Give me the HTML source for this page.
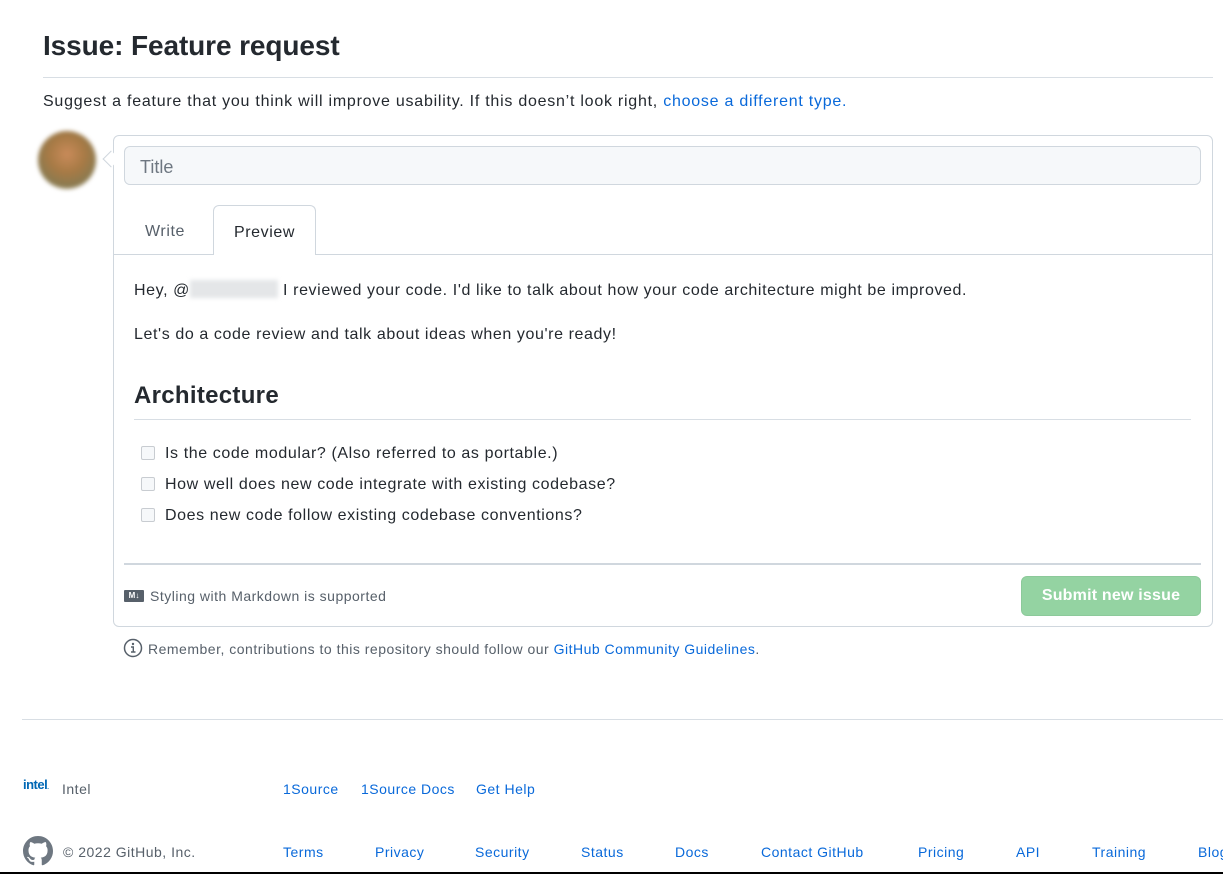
<!DOCTYPE html>
<html><head><meta charset="utf-8"><style>
*{box-sizing:border-box;margin:0;padding:0}
body{width:1223px;height:874px;overflow:hidden;background:#fff;font-family:"Liberation Sans","DejaVu Sans",sans-serif;color:#24292f;position:relative}
.a{position:absolute;white-space:nowrap}
a,.l{color:#0969da;text-decoration:none}
.t{letter-spacing:0.6px}
.s{letter-spacing:0.5px}
.cb{position:absolute;width:14px;height:14px;border:1px solid #c8ccd1;border-radius:2px;background:#f6f8fa}
</style></head><body>
<div class="a" style="left:43px;top:30px;font-size:28px;font-weight:600;letter-spacing:-0.1px">Issue: Feature request</div>
<div class="a" style="left:43px;top:77px;width:1170px;height:1px;background:#d8dee4"></div>
<div class="a" style="left:43px;top:93px;font-size:16px;letter-spacing:0.75px">Suggest a feature that you think will improve usability. If this doesn’t look right, <span class="l">choose a different type.</span></div>
<div class="a" style="left:38px;top:131px;width:58px;height:58px;border-radius:50%;background:radial-gradient(circle at 50% 40%,#c98b5a 0%,#a77a45 40%,#8a7a50 70%,#e8e0d0 100%);filter:blur(2px)"></div>
<div class="a" style="left:113px;top:135px;width:1100px;height:492px;border:1px solid #d0d7de;border-radius:6px"></div>
<div class="a" style="left:105px;top:153px;width:12px;height:12px;border-left:1px solid #d0d7de;border-bottom:1px solid #d0d7de;background:#fff;transform:rotate(45deg)"></div>
<div class="a" style="left:124px;top:146px;width:1077px;height:39px;border:1px solid #d0d7de;border-radius:6px;background:#f6f8fa;padding:10px 15px;font-size:18px;color:#6e7781" class="t">Title</div>
<div class="a" style="left:114px;top:254px;width:1098px;height:1px;background:#d0d7de"></div>
<div class="a t" style="left:145px;top:223px;font-size:16px;color:#57606a">Write</div>
<div class="a t" style="left:213px;top:205px;width:103px;height:50px;border:1px solid #d0d7de;border-bottom:none;border-radius:6px 6px 0 0;background:#fff;padding-top:18px;text-align:center;font-size:16px">Preview</div>
<div class="a t" style="left:134px;top:280px;font-size:16px">Hey, @<span style="display:inline-block;width:88px;height:18px;background:#e4e6e8;vertical-align:-3px;filter:blur(2px)"></span> I reviewed your code. I'd like to talk about how your code architecture might be improved.</div>
<div class="a t" style="left:134px;top:326px;font-size:16px">Let's do a code review and talk about ideas when you're ready!</div>
<div class="a" style="left:134px;top:382px;font-size:24px;font-weight:600;letter-spacing:0.3px">Architecture</div>
<div class="a" style="left:134px;top:419px;width:1057px;height:1px;background:#d8dee4"></div>
<div class="cb" style="left:141px;top:446px"></div>
<div class="a t" style="left:165px;top:445px;font-size:16px">Is the code modular? (Also referred to as portable.)</div>
<div class="cb" style="left:141px;top:477px"></div>
<div class="a t" style="left:165px;top:476px;font-size:16px">How well does new code integrate with existing codebase?</div>
<div class="cb" style="left:141px;top:508px"></div>
<div class="a t" style="left:165px;top:507px;font-size:16px">Does new code follow existing codebase conventions?</div>
<div class="a" style="left:124px;top:563px;width:1077px;height:2px;background:#d0d7de"></div>
<div class="a" style="left:124px;top:590px;width:20px;height:12px;background:#57606a;border-radius:1px;color:#fff;font-size:8px;font-weight:bold;line-height:12px;text-align:center">M↓</div>
<div class="a s" style="left:150px;top:588px;font-size:14px;color:#57606a">Styling with Markdown is supported</div>
<div class="a" style="left:1021px;top:576px;width:180px;height:40px;background:#94d3a2;border:1px solid #8cc99a;border-radius:6px;color:#fff;font-size:16px;font-weight:600;text-align:center;line-height:38px;letter-spacing:0.2px">Submit new issue</div>
<svg class="a" style="left:123px;top:638px" width="20" height="20" viewBox="0 0 20 20"><circle cx="10" cy="10" r="8.5" fill="none" stroke="#57606a" stroke-width="1.5"/><circle cx="10" cy="6" r="1.2" fill="#57606a"/><path d="M8 9h2.3v5M8 14h4.5" stroke="#57606a" stroke-width="1.4" fill="none"/></svg>
<div class="a s" style="left:148px;top:641px;font-size:14px;color:#57606a">Remember, contributions to this repository should follow our <span class="l">GitHub Community Guidelines</span>.</div>
<div class="a" style="left:22px;top:719px;width:1201px;height:1px;background:#d8dee4"></div>
<div class="a" style="left:23px;top:777px;font-size:13px;font-weight:bold;color:#0068b5;letter-spacing:-0.5px">intel<span style="font-size:6px">.</span></div>
<div class="a s" style="left:62px;top:781px;font-size:14px;color:#57606a">Intel</div>
<div class="a l s" style="left:283px;top:781px;font-size:14px">1Source</div>
<div class="a l s" style="left:361px;top:781px;font-size:14px">1Source Docs</div>
<div class="a l s" style="left:476px;top:781px;font-size:14px">Get Help</div>
<svg class="a" style="left:23px;top:836px" width="30" height="30" viewBox="0 0 16 16"><path fill="#6e7781" d="M8 0C3.58 0 0 3.58 0 8c0 3.540 2.29 6.53 5.47 7.59.4.07.55-.17.55-.38 0-.19-.01-.82-.01-1.49-2.01.37-2.53-.49-2.690-.94-.09-.23-.48-.94-.82-1.13-.28-.15-.68-.52-.01-.53.63-.01 1.08.58 1.23.82.72 1.21 1.87.87 2.33.66.07-.52.28-.87.51-1.07-1.78-.2-3.64-.89-3.64-3.95 0-.87.31-1.59.82-2.15-.08-.2-.36-1.02.08-2.12 0 0 .67-.21 2.2.82.64-.18 1.32-.27 2-.27.68 0 1.36.09 2 .27 1.53-1.04 2.2-.82 2.2-.82.44 1.1.16 1.92.08 2.12.51.56.82 1.27.82 2.15 0 3.07-1.87 3.75-3.65 3.95.29.25.54.73.54 1.48 0 1.07-.01 1.93-.01 2.2 0 .21.15.46.55.38A8.013 8.013 0 0016 8c0-4.42-3.58-8-8-8z"/></svg>
<div class="a s" style="left:63px;top:844px;font-size:14px;color:#57606a">© 2022 GitHub, Inc.</div>
<div class="a l s" style="left:283px;top:844px;font-size:14px">Terms</div>
<div class="a l s" style="left:375px;top:844px;font-size:14px">Privacy</div>
<div class="a l s" style="left:475px;top:844px;font-size:14px">Security</div>
<div class="a l s" style="left:581px;top:844px;font-size:14px">Status</div>
<div class="a l s" style="left:675px;top:844px;font-size:14px">Docs</div>
<div class="a l s" style="left:761px;top:844px;font-size:14px">Contact GitHub</div>
<div class="a l s" style="left:918px;top:844px;font-size:14px">Pricing</div>
<div class="a l s" style="left:1016px;top:844px;font-size:14px">API</div>
<div class="a l s" style="left:1092px;top:844px;font-size:14px">Training</div>
<div class="a l s" style="left:1198px;top:844px;font-size:14px">Blog</div>
<div class="a" style="left:0;top:872px;width:1223px;height:2px;background:#000"></div>
</body></html>
